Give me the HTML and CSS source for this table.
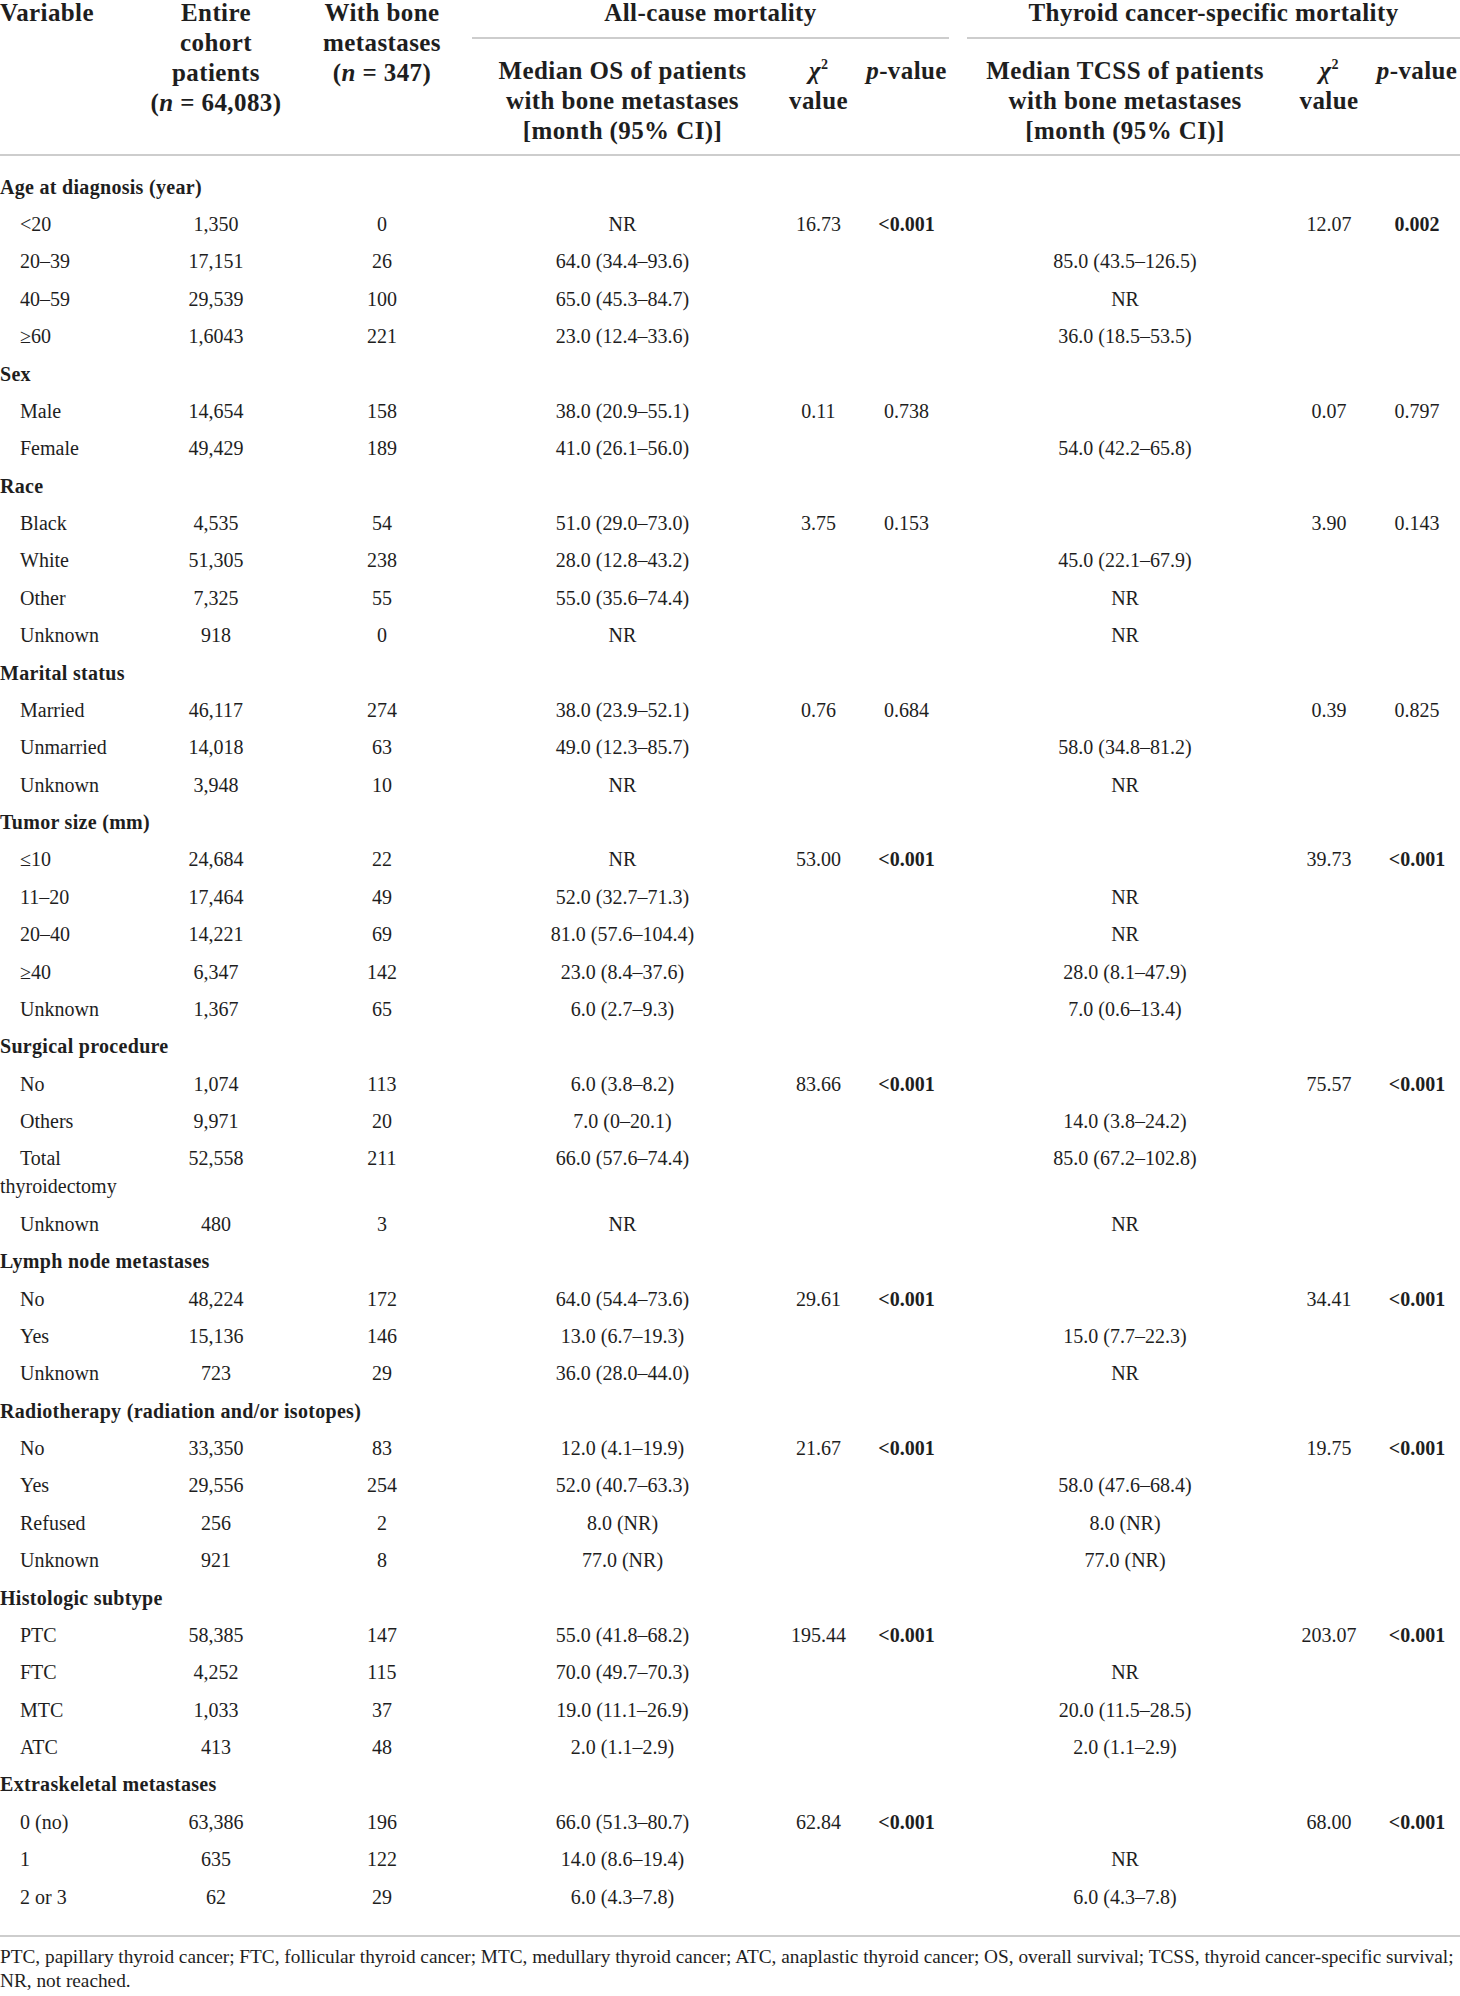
FILE: index.html
```html
<!DOCTYPE html>
<html lang="en">
<head>
<meta charset="utf-8">
<title>Table</title>
<link rel="stylesheet" href="styles.css">
</head>
<body>
<table class="tbl">
  <colgroup>
    <col class="w1"><col class="w2"><col class="w3"><col class="w4"><col class="w5"><col class="w6"><col class="w7"><col class="w8"><col class="w9">
  </colgroup>
  <thead>
    <tr>
      <th rowspan="2" class="var">Variable</th>
      <th rowspan="2">Entire<br>cohort<br>patients<br><span class="nw">(<i>n</i> = 64,083)</span></th>
      <th rowspan="2">With bone<br>metastases<br><span class="nw">(<i>n</i> = 347)</span></th>
      <th colspan="3" class="grp"><div class="grp-label">All-cause mortality</div></th>
      <th colspan="3" class="grp"><div class="grp-label grp-label-2">Thyroid cancer-specific mortality</div></th>
    </tr>
    <tr class="sub">
      <th>Median OS of patients<br>with bone metastases<br>[month (95% CI)]</th>
      <th><i>χ</i><sup class="sup">2</sup><br>value</th>
      <th><i>p</i>-value</th>
      <th class="c7">Median TCSS of patients<br>with bone metastases<br>[month (95% CI)]</th>
      <th><i>χ</i><sup class="sup">2</sup><br>value</th>
      <th class="c9"><i>p</i>-value</th>
    </tr>
  </thead>
  <tbody>
    <tr class="cat first"><td colspan="9">Age at diagnosis (year)</td></tr>
    <tr class="row"><td>&lt;20</td><td>1,350</td><td>0</td><td>NR</td><td>16.73</td><td class="b">&lt;0.001</td><td></td><td>12.07</td><td class="b">0.002</td></tr>
    <tr class="row"><td>20–39</td><td>17,151</td><td>26</td><td>64.0 (34.4–93.6)</td><td></td><td></td><td>85.0 (43.5–126.5)</td><td></td><td></td></tr>
    <tr class="row"><td>40–59</td><td>29,539</td><td>100</td><td>65.0 (45.3–84.7)</td><td></td><td></td><td>NR</td><td></td><td></td></tr>
    <tr class="row"><td>≥60</td><td>1,6043</td><td>221</td><td>23.0 (12.4–33.6)</td><td></td><td></td><td>36.0 (18.5–53.5)</td><td></td><td></td></tr>

    <tr class="cat"><td colspan="9">Sex</td></tr>
    <tr class="row"><td>Male</td><td>14,654</td><td>158</td><td>38.0 (20.9–55.1)</td><td>0.11</td><td>0.738</td><td></td><td>0.07</td><td>0.797</td></tr>
    <tr class="row"><td>Female</td><td>49,429</td><td>189</td><td>41.0 (26.1–56.0)</td><td></td><td></td><td>54.0 (42.2–65.8)</td><td></td><td></td></tr>

    <tr class="cat"><td colspan="9">Race</td></tr>
    <tr class="row"><td>Black</td><td>4,535</td><td>54</td><td>51.0 (29.0–73.0)</td><td>3.75</td><td>0.153</td><td></td><td>3.90</td><td>0.143</td></tr>
    <tr class="row"><td>White</td><td>51,305</td><td>238</td><td>28.0 (12.8–43.2)</td><td></td><td></td><td>45.0 (22.1–67.9)</td><td></td><td></td></tr>
    <tr class="row"><td>Other</td><td>7,325</td><td>55</td><td>55.0 (35.6–74.4)</td><td></td><td></td><td>NR</td><td></td><td></td></tr>
    <tr class="row"><td>Unknown</td><td>918</td><td>0</td><td>NR</td><td></td><td></td><td>NR</td><td></td><td></td></tr>

    <tr class="cat"><td colspan="9">Marital status</td></tr>
    <tr class="row"><td>Married</td><td>46,117</td><td>274</td><td>38.0 (23.9–52.1)</td><td>0.76</td><td>0.684</td><td></td><td>0.39</td><td>0.825</td></tr>
    <tr class="row"><td>Unmarried</td><td>14,018</td><td>63</td><td>49.0 (12.3–85.7)</td><td></td><td></td><td>58.0 (34.8–81.2)</td><td></td><td></td></tr>
    <tr class="row"><td>Unknown</td><td>3,948</td><td>10</td><td>NR</td><td></td><td></td><td>NR</td><td></td><td></td></tr>

    <tr class="cat"><td colspan="9">Tumor size (mm)</td></tr>
    <tr class="row"><td>≤10</td><td>24,684</td><td>22</td><td>NR</td><td>53.00</td><td class="b">&lt;0.001</td><td></td><td>39.73</td><td class="b">&lt;0.001</td></tr>
    <tr class="row"><td>11–20</td><td>17,464</td><td>49</td><td>52.0 (32.7–71.3)</td><td></td><td></td><td>NR</td><td></td><td></td></tr>
    <tr class="row"><td>20–40</td><td>14,221</td><td>69</td><td>81.0 (57.6–104.4)</td><td></td><td></td><td>NR</td><td></td><td></td></tr>
    <tr class="row"><td>≥40</td><td>6,347</td><td>142</td><td>23.0 (8.4–37.6)</td><td></td><td></td><td>28.0 (8.1–47.9)</td><td></td><td></td></tr>
    <tr class="row"><td>Unknown</td><td>1,367</td><td>65</td><td>6.0 (2.7–9.3)</td><td></td><td></td><td>7.0 (0.6–13.4)</td><td></td><td></td></tr>

    <tr class="cat"><td colspan="9">Surgical procedure</td></tr>
    <tr class="row"><td>No</td><td>1,074</td><td>113</td><td>6.0 (3.8–8.2)</td><td>83.66</td><td class="b">&lt;0.001</td><td></td><td>75.57</td><td class="b">&lt;0.001</td></tr>
    <tr class="row"><td>Others</td><td>9,971</td><td>20</td><td>7.0 (0–20.1)</td><td></td><td></td><td>14.0 (3.8–24.2)</td><td></td><td></td></tr>
    <tr class="row"><td>Total thyroidectomy</td><td>52,558</td><td>211</td><td>66.0 (57.6–74.4)</td><td></td><td></td><td>85.0 (67.2–102.8)</td><td></td><td></td></tr>
    <tr class="row"><td>Unknown</td><td>480</td><td>3</td><td>NR</td><td></td><td></td><td>NR</td><td></td><td></td></tr>

    <tr class="cat"><td colspan="9">Lymph node metastases</td></tr>
    <tr class="row"><td>No</td><td>48,224</td><td>172</td><td>64.0 (54.4–73.6)</td><td>29.61</td><td class="b">&lt;0.001</td><td></td><td>34.41</td><td class="b">&lt;0.001</td></tr>
    <tr class="row"><td>Yes</td><td>15,136</td><td>146</td><td>13.0 (6.7–19.3)</td><td></td><td></td><td>15.0 (7.7–22.3)</td><td></td><td></td></tr>
    <tr class="row"><td>Unknown</td><td>723</td><td>29</td><td>36.0 (28.0–44.0)</td><td></td><td></td><td>NR</td><td></td><td></td></tr>

    <tr class="cat"><td colspan="9">Radiotherapy (radiation and/or isotopes)</td></tr>
    <tr class="row"><td>No</td><td>33,350</td><td>83</td><td>12.0 (4.1–19.9)</td><td>21.67</td><td class="b">&lt;0.001</td><td></td><td>19.75</td><td class="b">&lt;0.001</td></tr>
    <tr class="row"><td>Yes</td><td>29,556</td><td>254</td><td>52.0 (40.7–63.3)</td><td></td><td></td><td>58.0 (47.6–68.4)</td><td></td><td></td></tr>
    <tr class="row"><td>Refused</td><td>256</td><td>2</td><td>8.0 (NR)</td><td></td><td></td><td>8.0 (NR)</td><td></td><td></td></tr>
    <tr class="row"><td>Unknown</td><td>921</td><td>8</td><td>77.0 (NR)</td><td></td><td></td><td>77.0 (NR)</td><td></td><td></td></tr>

    <tr class="cat"><td colspan="9">Histologic subtype</td></tr>
    <tr class="row"><td>PTC</td><td>58,385</td><td>147</td><td>55.0 (41.8–68.2)</td><td>195.44</td><td class="b">&lt;0.001</td><td></td><td>203.07</td><td class="b">&lt;0.001</td></tr>
    <tr class="row"><td>FTC</td><td>4,252</td><td>115</td><td>70.0 (49.7–70.3)</td><td></td><td></td><td>NR</td><td></td><td></td></tr>
    <tr class="row"><td>MTC</td><td>1,033</td><td>37</td><td>19.0 (11.1–26.9)</td><td></td><td></td><td>20.0 (11.5–28.5)</td><td></td><td></td></tr>
    <tr class="row"><td>ATC</td><td>413</td><td>48</td><td>2.0 (1.1–2.9)</td><td></td><td></td><td>2.0 (1.1–2.9)</td><td></td><td></td></tr>

    <tr class="cat"><td colspan="9">Extraskeletal metastases</td></tr>
    <tr class="row"><td>0 (no)</td><td>63,386</td><td>196</td><td>66.0 (51.3–80.7)</td><td>62.84</td><td class="b">&lt;0.001</td><td></td><td>68.00</td><td class="b">&lt;0.001</td></tr>
    <tr class="row"><td>1</td><td>635</td><td>122</td><td>14.0 (8.6–19.4)</td><td></td><td></td><td>NR</td><td></td><td></td></tr>
    <tr class="row last"><td>2 or 3</td><td>62</td><td>29</td><td>6.0 (4.3–7.8)</td><td></td><td></td><td>6.0 (4.3–7.8)</td><td></td><td></td></tr>
  </tbody>
</table>
<p class="note">PTC, papillary thyroid cancer; FTC, follicular thyroid cancer; MTC, medullary thyroid cancer; ATC, anaplastic thyroid cancer; OS, overall survival; TCSS, thyroid cancer-specific survival;<br>NR, not reached.</p>
</body>
</html>
```

FILE: styles.css
```css
html, body {
  margin: 0;
  padding: 0;
  background: #ffffff;
  color: #1e1e1e;
  font-family: "Liberation Serif", "Times New Roman", serif;
}

.tbl {
  width: 1460px;
  table-layout: fixed;
  border-collapse: separate;
  border-spacing: 0;
  margin-top: -2px;
}

.w1 { width: 140px; }
.w2 { width: 152px; }
.w3 { width: 180px; }
.w4 { width: 301px; }
.w5 { width: 91px; }
.w6 { width: 85px; }
.w7 { width: 344px; }
.w8 { width: 72px; }
.w9 { width: 95px; }

.tbl th {
  font-size: 25px;
  line-height: 30px;
  font-weight: bold;
  letter-spacing: 0.4px;
  padding: 0;
  vertical-align: top;
  text-align: center;
  white-space: nowrap;
}

.nw { white-space: nowrap; }

.tbl th[rowspan] {
  border-bottom: 2px solid #cdcdcd;
}

.tbl th.var {
  text-align: left;
}

.tbl th.grp {
  padding: 0;
}

.grp-label {
  padding-bottom: 9px;
  border-bottom: 2px solid #cdcdcd;
}

.grp-label-2 {
  margin-left: 18px;
}

.sub th {
  padding-top: 17px;
  padding-bottom: 8px;
  border-bottom: 2px solid #cdcdcd;
}

.sub th.c7 { padding-left: 8px; }
.sub th.c9 { padding-left: 9px; }

.sup {
  font-size: 14px;
  line-height: 0;
  vertical-align: 10px;
  letter-spacing: 0;
}

.tbl td {
  font-size: 20px;
  line-height: 28px;
  padding: 4.7px 0;
  vertical-align: top;
  text-align: center;
}

.row td:first-child {
  text-align: left;
  text-indent: 20px;
}

.row td:nth-child(7) { padding-left: 8px; }
.row td:nth-child(9) { padding-left: 9px; }

.cat td {
  text-align: left;
  font-weight: bold;
  letter-spacing: 0.3px;
}

.first td { padding-top: 16.7px; }

.last td {
  padding-bottom: 24.7px;
  border-bottom: 2px solid #cdcdcd;
}

.b { font-weight: bold; }

.note {
  margin: 0;
  padding-top: 8px;
  font-size: 19.3px;
  line-height: 24px;
}
```
